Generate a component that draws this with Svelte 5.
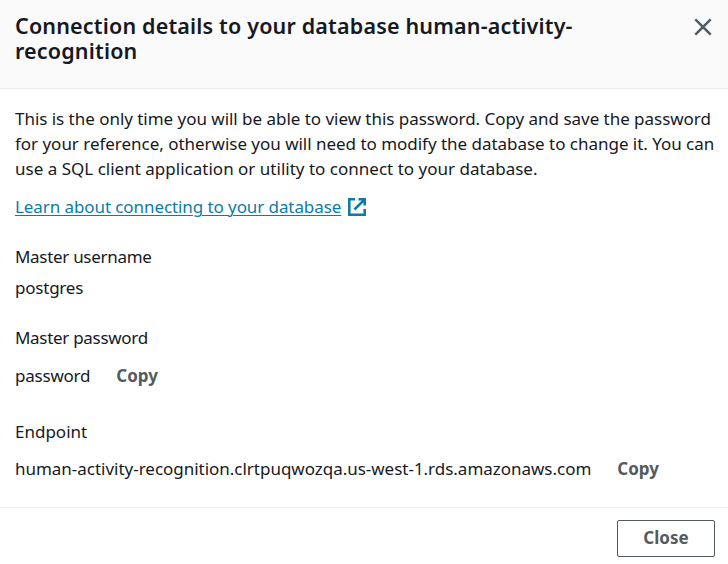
<script>
  const intro = [
    { text: 'This is the only time you will be able to view this password. Copy and save the password', cls: 'i1' },
    { text: 'for your reference, otherwise you will need to modify the database to change it. You can', cls: 'i2' },
    { text: 'use a SQL client application or utility to connect to your database.', cls: 'i3' }
  ];
</script>

<div class="modal" role="dialog" aria-labelledby="title">
  <header>
    <h2 id="title"><span class="line t1">Connection details to your database human-activity-</span><span class="line t2">recognition</span></h2>
    <button class="dismiss" aria-label="Close modal">
      <svg width="18" height="18" viewBox="0 0 18 18"><path d="M1.3 1.3 16.7 16.7M16.7 1.3 1.3 16.7" /></svg>
    </button>
  </header>

  <main>
    <p>
      {#each intro as line}
        <span class="line {line.cls}">{line.text}</span>
      {/each}
    </p>
    <div class="link">
      <a href="#learn"><span class="l1">Learn about connecting to your database</span></a>
      <svg width="18" height="18" viewBox="0 0 18 18"><path d="M7 1.3H1.3V16.7H16.7V11M10.5 1.3H16.7V7.5M16.4 1.6 6.5 11.5" /></svg>
    </div>
    <dl>
      <dt><span class="u1">Master username</span></dt>
      <dd class="user"><span class="u2">postgres</span></dd>
      <dt><span class="u1">Master password</span></dt>
      <dd class="pass"><span class="p2">password</span><button class="copy">Copy</button></dd>
      <dt class="end">Endpoint</dt>
      <dd class="host"><span class="e2">human-activity-recognition.clrtpuqwozqa.us-west-1.rds.amazonaws.com</span><button class="copy">Copy</button></dd>
    </dl>
  </main>

  <footer><button class="close">Close</button></footer>
</div>

<style>
  .modal {
    width: 728px;
    height: 564px;
    box-sizing: border-box;
    overflow: hidden;
    display: flex;
    flex-direction: column;
    background: #fff;
    color: #16191f;
    font: 17px/25px "Noto Sans", "Open Sans", sans-serif;
    white-space: nowrap;
  }
  button { font: inherit; color: #545b60; background: none; border: 0; padding: 0; margin: 0; }
  header {
    box-sizing: border-box;
    height: 89px;
    flex: none;
    display: flex;
    justify-content: space-between;
    align-items: flex-start;
    padding: 13px 16px 0 15px;
    background: #fafafa;
    border-bottom: 1px solid #eaeded;
  }
  h2 { margin: 0; font-size: 21.5px; line-height: 25px; font-weight: 600; letter-spacing: 0.17px; }
  .dismiss { display: flex; margin-top: 5px; }
  svg { fill: none; flex: none; }
  .dismiss svg { stroke: #545b60; stroke-width: 2.5; }
  main { flex: none; box-sizing: border-box; height: 418px; padding: 17px 13px 0 15px; }
  p, dl, dd { margin: 0; }
  .line { display: block; }
  .i1 { letter-spacing: -0.03px; }
  .i2 { letter-spacing: -0.025px; }
  .i3 { letter-spacing: 0.01px; }
  .l1 { letter-spacing: -0.085px; }
  .u1 { letter-spacing: -0.3px; }
  .u2, .p2 { letter-spacing: -0.22px; }
  .e2 { letter-spacing: -0.02px; }
  .link { display: flex; align-items: center; gap: 7px; margin-top: 13px; color: #0b7bab; }
  .link svg { stroke: #0b7bab; stroke-width: 2.6; margin-top: 1px; }
  a { color: inherit; text-decoration: underline; text-decoration-thickness: 1px; text-underline-offset: 2px; }
  dt { margin-top: 25px; }
  dt.end { margin-top: 31px; }
  dd { display: flex; }
  .user { margin-top: 6px; }
  .pass { margin-top: 13px; }
  .host { margin-top: 12px; }
  .copy { font-weight: 700; margin-left: 26px; }
  footer {
    flex: 1;
    display: flex;
    justify-content: flex-end;
    align-items: flex-start;
    padding: 12px 13px 0;
    border-top: 1px solid #eff1f1;
  }
  .close {
    box-sizing: border-box;
    width: 98px;
    height: 37px;
    border: 1px solid #545b60;
    border-radius: 2px;
    font-weight: 700;
    padding-bottom: 2px;
  }
</style>
